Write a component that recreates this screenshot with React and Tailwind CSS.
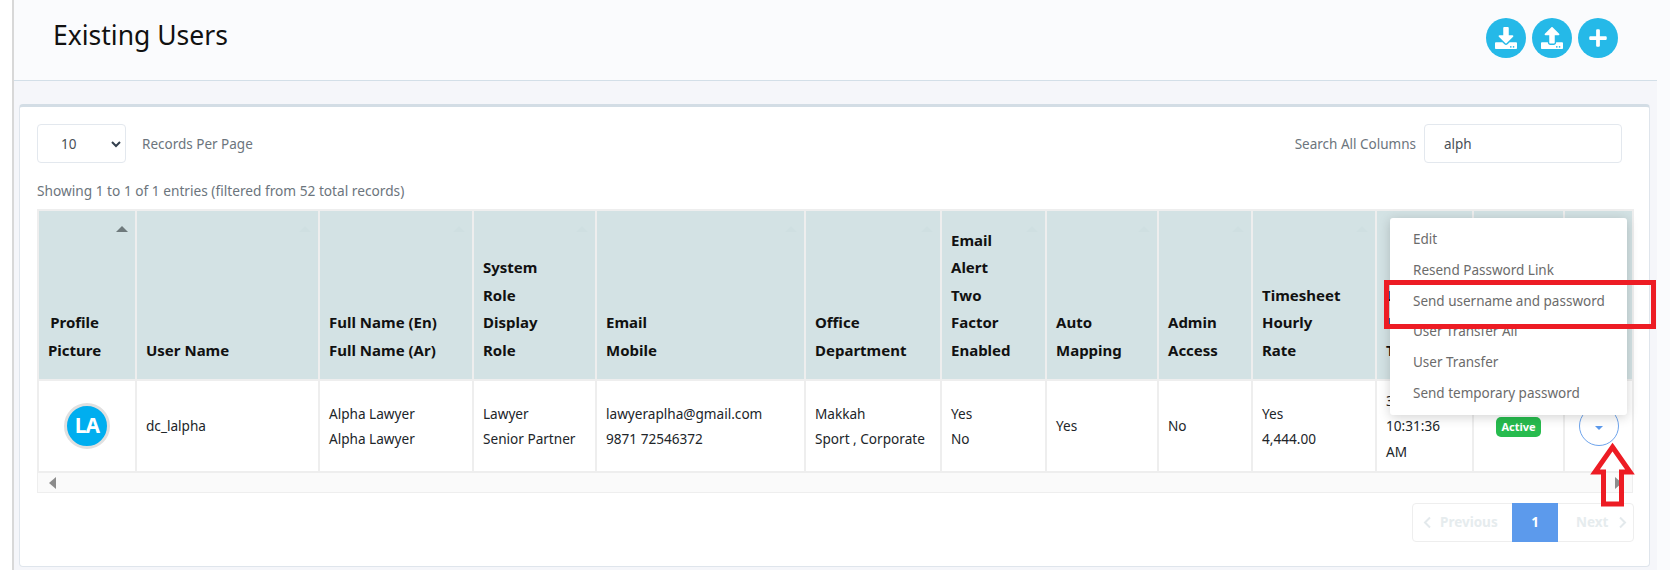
import React from "react";
import { FaDownload, FaUpload, FaPlus } from "react-icons/fa";

const cols = [
  { w: "w-[98px]", head: ["Profile", "Picture"], sort: "up" },
  { w: "w-[183px]", head: ["User Name"], cell: ["dc_lalpha"] },
  { w: "w-[154px]", head: ["Full Name (En)", "Full Name (Ar)"], cell: ["Alpha Lawyer", "Alpha Lawyer"] },
  { w: "w-[123px]", head: ["System", "Role", "Display", "Role"], cell: ["Lawyer", "Senior Partner"] },
  { w: "w-[209px]", head: ["Email", "Mobile"], cell: ["lawyeraplha@gmail.com", "9871 72546372"] },
  { w: "w-[136px]", head: ["Office", "Department"], cell: ["Makkah", "Sport , Corporate"] },
  { w: "w-[105px]", head: ["Email", "Alert", "Two", "Factor", "Enabled"], cell: ["Yes", "No"] },
  { w: "w-[112px]", head: ["Auto", "Mapping"], cell: ["Yes"] },
  { w: "w-[94px]", head: ["Admin", "Access"], cell: ["No"] },
  { w: "w-[124px]", head: ["Timesheet", "Hourly", "Rate"], cell: ["Yes", "4,444.00"] },
  { w: "w-[97px]", head: ["Last", "Login", "Time"], cell: ["30-01-2024", "10:31:36", "AM"] },
  { w: "w-[91px]", head: [] },
  { w: "w-[69px]", head: [] },
];

const menu = ["Edit", "Resend Password Link", "Send username and password", "User Transfer All", "User Transfer", "Send temporary password"];

function RoundButton({ children }) {
  return (
    <button className="w-10 h-10 rounded-full bg-[#25b9e8] text-white flex items-center justify-center">
      {children}
    </button>
  );
}

function Chevron({ d }) {
  return (
    <svg className="w-[9px] h-[13px]" viewBox="0 0 9 13" fill="none">
      <path d={d} stroke="#e3e9ec" strokeWidth="2" />
    </svg>
  );
}

export default function App() {
  return (
    <div className="relative w-[1670px] h-[570px] overflow-hidden bg-[#fafbfd] flex text-[13.5px] text-[#212529] font-['Noto_Sans',sans-serif]">
      <div className="w-[14px] shrink-0 bg-white border-r-2 border-[#d8d8d8]" />
      <div className="w-[1643px] shrink-0 flex flex-col">
        <header className="h-[81px] shrink-0 bg-[#fafbfd] border-b border-[#d3dfe8] flex items-start justify-between pl-[39px] pr-[39px] pt-[18px]">
          <h1 className="text-[26.5px] leading-[34px] text-[#111111]">Existing Users</h1>
          <div className="flex gap-[6px]">
            <RoundButton><FaDownload className="w-[22px] h-[22px]" /></RoundButton>
            <RoundButton><FaUpload className="w-[22px] h-[22px]" /></RoundButton>
            <RoundButton><FaPlus className="w-[20px] h-[20px]" /></RoundButton>
          </div>
        </header>
        <main className="flex-1 bg-[#f5f6fa] pt-[23px] pl-[5px]">
          <section className="w-[1631px] h-[463px] bg-white rounded-[4px] border border-[#dfe5ec] border-t-[3px] border-t-[#d3dde5] pl-[17px] pt-[17px]">
            <div className="flex items-center justify-between w-[1585px] h-[39px]">
              <div className="flex items-center gap-[16px]">
                <div className="relative w-[89px] h-[39px] border border-[#e3e8ee] rounded-[4px] flex items-center pl-[23px] pt-px text-[#495057]">
                  10
                  <svg className="absolute right-[4px] top-[15px] w-[10px] h-[8px]" viewBox="0 0 10 8">
                    <path d="M1 2l4 4 4-4" fill="none" stroke="#333f4d" strokeWidth="2" />
                  </svg>
                </div>
                <span className="pt-px text-[#6c757d]">Records Per Page</span>
              </div>
              <div className="flex items-center gap-[8px]">
                <span className="pt-px text-[#6c757d]">Search All Columns</span>
                <div className="w-[198px] h-[39px] border border-[#e3e8ee] rounded-[4px] flex items-center pl-[19px] pt-px text-[#495057]">alph</div>
              </div>
            </div>
            <p className="mt-[19px] h-[18px] leading-[18px] text-[13.7px] text-[#6c757d]">Showing 1 to 1 of 1 entries (filtered from 52 total records)</p>
            <div className="mt-[9px] w-[1596px]">
              <table className="table-fixed border-collapse w-[1595px]">
                <thead>
                  <tr>
                    {cols.map((c, i) => (
                      <th key={i} className={`${c.w} relative h-[170px] bg-[#d3e2e4] border-2 border-[#eeeeee] align-bottom pb-[15px] px-[9px] font-bold text-[15px] leading-[27.5px] text-[#111111] text-left`}>
                        <div className="inline-block text-center">
                          {c.head.map((h, j) => (
                            <div key={j} className={`whitespace-nowrap ${i === 0 ? "text-center" : "text-left"}`}>{h}</div>
                          ))}
                        </div>
                        <span className={`absolute right-[7px] top-[15px] w-0 h-0 border-x-[6px] border-x-transparent border-b-[6px] ${i === 0 ? "border-b-[#6f7a7c]" : "border-b-[#cfdfe1]"}`} />
                      </th>
                    ))}
                  </tr>
                </thead>
                <tbody>
                  <tr>
                    {cols.map((c, i) => (
                      <td key={i} className="h-[92px] border-2 border-[#eeeeee] px-[9px] text-[13.6px] leading-[25.5px] text-[#212529] align-middle">
                        {i === 0 && (
                          <div className="mx-auto w-[46px] h-[46px] rounded-full bg-[#00aeef] border-[3px] border-[#e0e0e0] flex items-center justify-center text-white font-bold text-[21px] tracking-[-1px]">LA</div>
                        )}
                        {c.cell && c.cell.map((t, j) => <div key={j} className="whitespace-nowrap">{t}</div>)}
                        {i === 11 && (
                          <span className="mx-auto block w-[45px] h-[20px] mt-[1px] rounded-[5px] bg-[#27bb4e] text-white font-bold text-[11px] leading-[20px] text-center">Active</span>
                        )}
                        {i === 12 && (
                          <button className="mx-auto w-10 h-10 rounded-full border border-[#6ea4ec] flex items-center justify-center">
                            <span className="w-0 h-0 mt-[3px] border-x-[4px] border-x-transparent border-t-[4px] border-t-[#5c9aec]" />
                          </button>
                        )}
                      </td>
                    ))}
                  </tr>
                </tbody>
              </table>
              <div className="w-[1596px] h-[20px] bg-[#fafafa] border border-t-0 border-[#eeeeee] flex items-center justify-between pl-[11px] pr-[10px]">
                <span className="w-0 h-0 border-y-[6px] border-y-transparent border-r-[7px] border-r-[#8c8c8c]" />
                <span className="w-0 h-0 border-y-[6px] border-y-transparent border-l-[7px] border-l-[#8c8c8c]" />
              </div>
            </div>
            <nav className="mt-[10px] ml-[1375px] w-[222px] h-[39px] border border-[#eeeeee] rounded-[4px] flex items-stretch font-bold text-[13.5px] text-[#e6ecee]">
              <span className="w-[99px] flex items-center pl-[10px] gap-[8px]">
                <Chevron d="M7 1.5 2 6.5l5 5" />Previous
              </span>
              <span className="w-[46px] -my-px bg-[#5c9aec] text-white flex items-center justify-center">1</span>
              <span className="flex-1 flex items-center pl-[18px] gap-[10px]">
                Next<Chevron d="M2 1.5l5 5-5 5" />
              </span>
            </nav>
          </section>
        </main>
      </div>

      <ul className="absolute left-[1390px] top-[218px] w-[237px] h-[197px] bg-white rounded-[3px] shadow-[0_2px_12px_rgba(0,0,0,0.18)] py-[6px] text-[#6b6b6b] text-[13.5px]">
        {menu.map((m) => (
          <li key={m} className="h-[30.8px] leading-[30.8px] pl-[23px] whitespace-nowrap">{m}</li>
        ))}
      </ul>

      <div className="absolute left-[1384px] top-[280px] w-[272px] h-[49px] border-[5px] border-[#ed1c24]" />

      <svg className="absolute left-[1588px] top-[438px] w-[48px] h-[70px]" viewBox="0 0 48 70" fill="none">
        <path d="M24.5 9 L42 34 H33.5 V66 H15.5 V34 H7 Z" stroke="#ed1c24" strokeWidth="5" strokeLinejoin="miter" />
      </svg>
    </div>
  );
}
